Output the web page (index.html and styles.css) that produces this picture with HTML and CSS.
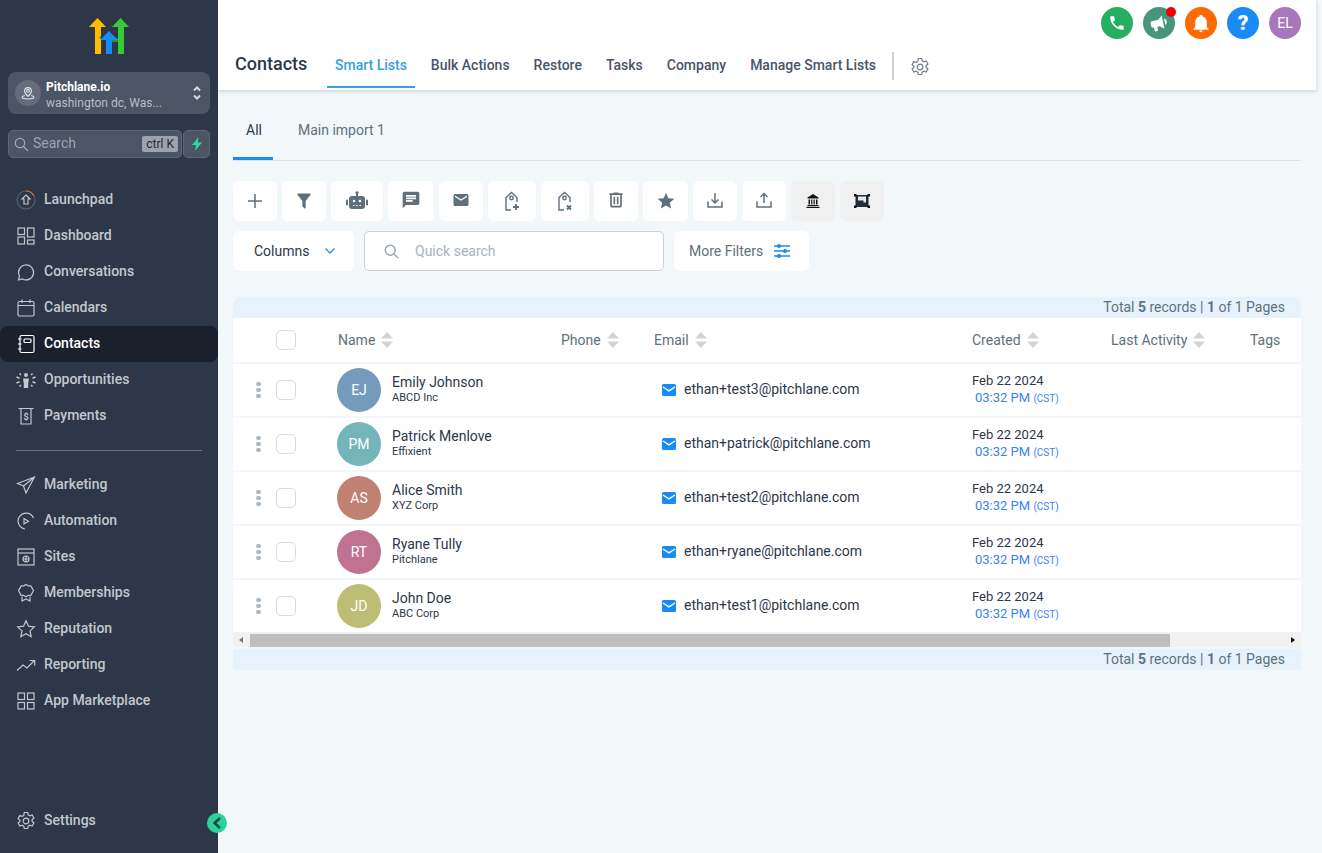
FILE: index.html
```html
<!DOCTYPE html>
<html lang="en">
<head>
  <meta charset="UTF-8">
  <meta name="viewport" content="width=device-width, initial-scale=1.0">
  <title>Contacts</title>
  <link rel="stylesheet" href="styles.css">
</head>
<body>
  <svg class="defs" width="0" height="0">
    <symbol id="sort" viewBox="0 0 12 16"><path d="M6 0l6 6.500H0zM6 16L0 9.500h12z"/></symbol>
    <symbol id="mail" viewBox="0 0 14 12"><path d="M1.500 0h11A1.500 1.500 0 0 1 14 1.500v9a1.500 1.500 0 0 1-1.500 1.500h-11A1.500 1.500 0 0 1 0 10.500v-9A1.500 1.500 0 0 1 1.500 0z"/><path d="M1 3l6 3.800L13 3" fill="none" stroke="#fff" stroke-width="1.400"/></symbol>
  </svg>

  <aside class="sidebar">
    <svg class="logo" width="40" height="36" viewBox="0 0 40 36">
      <path d="M0 9L8.500 0 17 9h-5v27H6V9z" fill="#ffbc00"/>
      <path d="M23 9L31.500 0 40 9h-5v27h-6V9z" fill="#37ca37"/>
      <path d="M12 20.500V18l-2 2zM23 20.500h6V24h-6z" fill="#1d9a2c"/>
      <path d="M11 22l9-9 9 9h-6v14h-6V22z" fill="#188bf6"/>
    </svg>

    <div class="location">
      <span class="location-icon">
        <svg width="14" height="14" viewBox="0 0 14 14" fill="none" stroke="#e2e5e9" stroke-width="1.100"><circle cx="7" cy="4.800" r="1.400"/><path d="M7 10.300C5 8.500 3.600 6.900 3.600 5A3.400 3.400 0 0 1 10.400 5C10.400 6.900 9 8.500 7 10.300z"/><path d="M3.800 9.500C2 10 1 10.600 1 11.300c0 1 2.700 1.700 6 1.700s6-.7 6-1.700c0-.7-1-1.300-2.800-1.800"/></svg>
      </span>
      <span class="location-text">
        <strong>Pitchlane.io</strong>
        <span>washington dc, Was...</span>
      </span>
      <svg class="location-arrows" width="10" height="16" viewBox="0 0 10 16" fill="none" stroke="#d5d8dd" stroke-width="2"><path d="M2 5.500l3-3 3 3M2 10.500l3 3 3-3"/></svg>
    </div>

    <div class="search-row">
      <div class="side-search">
        <svg width="15" height="15" viewBox="0 0 15 15" fill="none" stroke="#a0a7b2" stroke-width="1.300"><circle cx="6" cy="6" r="4.700"/><path d="M9.500 9.500l4.500 4.500"/></svg>
        <span class="side-search-text">Search</span>
        <kbd>ctrl K</kbd>
      </div>
      <button class="bolt">
        <svg width="12" height="14" viewBox="0 0 12 14"><path d="M7.500 0L1 8h4l-1 6 7-8.500H6.800z" fill="#37d69b"/></svg>
      </button>
    </div>

    <nav class="side-nav">
      <a class="side-link">
        <svg viewBox="0 0 20 20"><circle cx="10" cy="10" r="9" stroke="#566070"/><path d="M10 1a9 9 0 0 1 8 4.800" stroke="#d9772e"/><path d="M10 5l4 4h-2v5H8V9H6z"/></svg>
        Launchpad</a>
      <a class="side-link">
        <svg viewBox="0 0 20 20"><rect x="2" y="2" width="6.500" height="6.500"/><rect x="11.500" y="2" width="6.500" height="9"/><rect x="2" y="11" width="6.500" height="7"/><rect x="11.500" y="14" width="6.500" height="4"/></svg>
        Dashboard</a>
      <a class="side-link">
        <svg viewBox="0 0 20 20"><path d="M2.500 18l1-4A7.500 7.500 0 1 1 6.500 17z"/></svg>
        Conversations</a>
      <a class="side-link">
        <svg viewBox="0 0 20 20"><rect x="2" y="3.500" width="16" height="14.500" rx="1.500"/><path d="M2 7.500h16M6 1.500v3.500M14 1.500v3.500"/></svg>
        Calendars</a>
      <a class="side-link active">
        <svg viewBox="0 0 20 20"><rect x="4" y="1.500" width="14" height="17" rx="1.500"/><rect x="8" y="5" width="7" height="3.500" rx="1"/><path d="M2 5h3.500M2 10h3.500M2 15h3.500"/></svg>
        Contacts</a>
      <a class="side-link">
        <svg viewBox="0 0 20 20"><circle cx="10" cy="5" r="2" fill="#c3c7ce" stroke="none"/><path d="M7 8.500h6l-.8 5v4.500H7.800v-4.500z" fill="#c3c7ce" stroke="none"/><path d="M.5 7l3 1.200M.5 13l3-1.200M19.500 7l-3 1.200M19.500 13l-3-1.200M3.500 3.500l1.500 1.500M16.500 3.500L15 5M3.500 16.500L5 15M16.500 16.500L15 15" stroke-width="1.500"/></svg>
        Opportunities</a>
      <a class="side-link">
        <svg viewBox="0 0 20 20"><path d="M2.500 2.500h15M5 2.500V18h10V2.500"/><text x="10" y="14" text-anchor="middle" class="icon-dollar">$</text></svg>
        Payments</a>
    </nav>

    <div class="side-divider"></div>

    <nav class="side-nav lower">
      <a class="side-link">
        <svg viewBox="0 0 20 20"><path d="M18.500 2L1.500 8.500l6 2.500 2.500 7zM7.500 11L18.500 2"/></svg>
        Marketing</a>
      <a class="side-link">
        <svg viewBox="0 0 20 20"><path d="M17.500 7A8 8 0 1 0 9 18"/><path d="M8 7.500l4.500 2.700L8 13z"/></svg>
        Automation</a>
      <a class="side-link">
        <svg viewBox="0 0 20 20"><rect x="2" y="2" width="16" height="16"/><path d="M2 6h16"/><circle cx="10" cy="12" r="3"/><path d="M7 12h6M10 9v6"/></svg>
        Sites</a>
      <a class="side-link">
        <svg viewBox="0 0 20 20"><path d="M10 1.500l2.200 1.300 2.600.1 1.300 2.200 1.400 2.400-1.200 2.300-1.200 2.300-2.700.2L10 13.800l-2.400-1.500-2.700-.2-1.200-2.300-1.200-2.300 1.400-2.400 1.300-2.200 2.600-.1z"/><path d="M6 13.500V18l4-2 4 2v-4.500"/></svg>
        Memberships</a>
      <a class="side-link">
        <svg viewBox="0 0 20 20"><path d="M10 1.800l2.500 5.400 5.900.7-4.400 4 1.200 5.800-5.200-2.900-5.200 2.900L6 11.900l-4.400-4 5.900-.7z"/></svg>
        Reputation</a>
      <a class="side-link">
        <svg viewBox="0 0 20 20"><path d="M1 15.500l6-5.500 4 3 7.500-7.500M13.500 5.500h5.200v5"/></svg>
        Reporting</a>
      <a class="side-link">
        <svg viewBox="0 0 20 20"><rect x="2" y="2" width="6.500" height="6.500"/><rect x="11.500" y="2" width="6.500" height="6.500"/><rect x="2" y="11.500" width="6.500" height="6.500"/><rect x="11.500" y="11.500" width="6.500" height="6.500"/></svg>
        App Marketplace</a>
    </nav>

    <a class="side-link settings">
      <svg viewBox="0 0 20 20"><circle cx="10" cy="10" r="2.800"/><path d="M8.300 1.500h3.400l.5 2.400 1.700.9 2.300-.8 1.700 3-1.800 1.600v1.800l1.800 1.600-1.700 3-2.300-.8-1.700.9-.5 2.400H8.300l-.5-2.400-1.700-.9-2.300.8-1.700-3 1.800-1.600V9.200L2.100 7.600l1.700-3 2.300.8 1.700-.9z"/></svg>
      Settings</a>
    <button class="collapse">
      <svg width="10" height="12" viewBox="0 0 10 12" fill="none" stroke="#17423a" stroke-width="2.400"><path d="M8 1L2.500 6 8 11"/></svg>
    </button>
  </aside>

  <main class="main">
    <header class="topbar">
      <div class="top-actions">
        <span class="round green"><svg width="18" height="18" viewBox="0 0 24 24" fill="#fff"><path d="M6.620,10.790C8.060,13.620 10.380,15.940 13.210,17.380L15.410,15.180C15.690,14.900 16.080,14.820 16.430,14.930C17.550,15.300 18.750,15.500 20,15.500A1,1 0 0,1 21,16.500V20A1,1 0 0,1 20,21A17,17 0 0,1 3,4A1,1 0 0,1 4,3H7.500A1,1 0 0,1 8.500,4C8.500,5.250 8.700,6.450 9.070,7.570C9.180,7.920 9.100,8.310 8.820,8.590L6.620,10.790Z"/></svg></span>
        <span class="round teal"><svg width="20" height="20" viewBox="0 0 24 24" fill="#fff"><path transform="rotate(-12 12 12)" d="M12,8H4A2,2 0 0,0 2,10V14A2,2 0 0,0 4,16H5V20A1,1 0 0,0 6,21H8A1,1 0 0,0 9,20V16H12L17,20V4L12,8M21.500,12C21.500,13.710 20.540,15.260 19,16V8C20.530,8.750 21.500,10.300 21.500,12Z"/></svg><i class="dot-red"></i></span>
        <span class="round orange"><svg width="20" height="20" viewBox="0 0 24 24" fill="#fff"><path d="M21,19V20H3V19L5,17V11C5,7.900 7.030,5.170 10,4.290C10,4.190 10,4.100 10,4A2,2 0 0,1 12,2A2,2 0 0,1 14,4C14,4.100 14,4.190 14,4.290C16.970,5.170 19,7.900 19,11V17L21,19M14,21A2,2 0 0,1 12,23A2,2 0 0,1 10,21"/></svg></span>
        <span class="round blue help">?</span>
        <span class="round purple">EL</span>
      </div>
      <div class="top-nav">
        <h1>Contacts</h1>
        <a class="top-tab active">Smart Lists</a>
        <a class="top-tab">Bulk Actions</a>
        <a class="top-tab">Restore</a>
        <a class="top-tab">Tasks</a>
        <a class="top-tab">Company</a>
        <a class="top-tab">Manage Smart Lists</a>
        <span class="top-sep"></span>
        <svg class="top-gear" width="20" height="20" viewBox="0 0 20 20" fill="none" stroke="#737d88" stroke-width="1.200"><circle cx="10" cy="10" r="2.800"/><path d="M8.300 1.500h3.400l.5 2.400 1.700.9 2.300-.8 1.700 3-1.800 1.600v1.800l1.800 1.600-1.700 3-2.300-.8-1.700.9-.5 2.400H8.300l-.5-2.400-1.700-.9-2.300.8-1.700-3 1.800-1.600V9.200L2.100 7.600l1.700-3 2.300.8 1.700-.9z"/></svg>
      </div>
    </header>

    <section class="content">
      <div class="list-tabs">
        <a class="list-tab active">All</a>
        <a class="list-tab">Main import 1</a>
      </div>

      <div class="toolbar">
        <button class="tool w44"><svg width="16" height="16" viewBox="0 0 16 16" stroke="#5f707c" stroke-width="1.500"><path d="M8 1v14M1 8h14"/></svg></button>
        <button class="tool w44"><svg width="20" height="20" viewBox="0 0 24 24" fill="#5f707c"><path d="M14,12V19.880C14.040,20.180 13.940,20.500 13.710,20.710C13.320,21.100 12.690,21.100 12.300,20.710L10.290,18.700C10.060,18.470 9.960,18.160 10,17.870V12H9.970L4.210,4.620C3.870,4.190 3.950,3.560 4.380,3.220C4.570,3.080 4.780,3 5,3V3H19V3C19.220,3 19.430,3.080 19.620,3.220C20.050,3.560 20.130,4.190 19.790,4.620L14.030,12H14Z"/></svg></button>
        <button class="tool w52"><svg width="22" height="20" viewBox="0 0 22 20" fill="#5f707c"><rect x="3" y="5" width="16" height="13" rx="3"/><rect x="0" y="8.500" width="2" height="6" rx="1"/><rect x="20" y="8.500" width="2" height="6" rx="1"/><rect x="10" y="1.500" width="2" height="4"/><circle cx="11" cy="1.800" r="1.600"/><circle cx="8" cy="10" r="1.300" fill="#fff"/><circle cx="14" cy="10" r="1.300" fill="#fff"/><path d="M7 14h1.500v1H7zM10.200 14h1.500v1h-1.500zM13.500 14H15v1h-1.500z" fill="#fff"/></svg></button>
        <button class="tool w46"><svg class="up1" width="20" height="20" viewBox="0 0 24 24" fill="#5f707c"><path d="M20,2H4A2,2 0 0,0 2,4V22L6,18H20A2,2 0 0,0 22,16V4A2,2 0 0,0 20,2M6,9H18V11H6M14,14H6V12H14M18,8H6V6H18"/></svg></button>
        <button class="tool w44"><svg class="up1" width="18" height="18" viewBox="0 0 24 24" fill="#5f707c"><path d="M20,8L12,13L4,8V6L12,11L20,6M20,4H4C2.890,4 2,4.890 2,6V18A2,2 0 0,0 4,20H20A2,2 0 0,0 22,18V6C22,4.890 21.100,4 20,4Z"/></svg></button>
        <button class="tool w48"><svg width="16" height="20" viewBox="0 0 16 20" fill="none" stroke="#5f707c" stroke-width="1.400"><path d="M7 19H2V6.500L7.500 1.500 13 6.500V11"/><circle cx="7.500" cy="7" r="1.700"/><path d="M12 13v6M9 16h6" stroke-width="1.800"/></svg></button>
        <button class="tool w48"><svg width="16" height="20" viewBox="0 0 16 20" fill="none" stroke="#5f707c" stroke-width="1.400"><path d="M7 19H2V6.500L7.500 1.500 13 6.500V11"/><circle cx="7.500" cy="7" r="1.700"/><path d="M10 14.500l4 4M14 14.500l-4 4" stroke-width="1.800"/></svg></button>
        <button class="tool w44"><svg class="up1" width="20" height="20" viewBox="0 0 24 24" fill="#5f707c"><path d="M9,3V4H4V6H5V19A2,2 0 0,0 7,21H17A2,2 0 0,0 19,19V6H20V4H15V3H9M7,6H17V19H7V6M9,8V17H11V8H9M13,8V17H15V8H13Z"/></svg></button>
        <button class="tool w45"><svg width="20" height="20" viewBox="0 0 24 24" fill="#5f707c"><path d="M12,17.270L18.180,21L16.540,13.970L22,9.240L14.810,8.620L12,2L9.190,8.620L2,9.240L7.450,13.970L5.820,21L12,17.270Z"/></svg></button>
        <button class="tool w44"><svg class="up1" width="16" height="16" viewBox="0 0 16 16" fill="none" stroke="#5f707c" stroke-width="1.500"><path d="M1 9.500V15h14V9.500M8 1v9.500M4.500 7.500L8 11l3.500-3.500"/></svg></button>
        <button class="tool w44"><svg class="up1" width="16" height="16" viewBox="0 0 16 16" fill="none" stroke="#5f707c" stroke-width="1.500"><path d="M1 9.500V15h14V9.500M8 11V1.500M4.500 5L8 1.500 11.500 5"/></svg></button>
        <button class="tool w44 muted"><svg width="14" height="14" viewBox="0 0 14 14"><path d="M7 0L1.500 3.500v1h11v-1z" fill="#111"/><path d="M2.500 5.500h1.500v5H2.500zM5.200 5.500h1.200v5H5.200zM7.600 5.500h1.200v5H7.600zM10 5.500h1.500v5H10z" fill="#111"/><path d="M1.500 11h11v1h-11zM.5 12.800h13v1.200H.5z" fill="#111"/></svg></button>
        <button class="tool w44 muted"><svg width="16" height="14" viewBox="0 0 16 14"><path d="M1.500 1h13v12h-13z" fill="#1f2d3a"/><path d="M4 2.500h8v6H9.500V6.500H4z" fill="#e8e8e8"/><path d="M0 0h2.500v2.500H0zM13.500 0H16v2.500h-2.500zM0 11.500h2.500V14H0zM13.500 11.500H16V14h-2.500z" fill="#111"/></svg></button>
      </div>

      <div class="filters">
        <button class="columns-btn">Columns
          <svg width="12" height="8" viewBox="0 0 12 8" fill="none" stroke="#3b82f6" stroke-width="1.300"><path d="M1.500 1.500L6 6l4.500-4.500"/></svg>
        </button>
        <div class="quick-search">
          <svg width="15" height="15" viewBox="0 0 15 15" fill="none" stroke="#9aa5b1" stroke-width="1.400"><circle cx="6.200" cy="6.200" r="5"/><path d="M10 10l4.300 4.300"/></svg>
          <span>Quick search</span>
        </div>
        <button class="more-filters">More Filters
          <svg width="16" height="14" viewBox="0 0 16 14" stroke="#188bf6" stroke-width="1.500" fill="#188bf6"><path d="M0 2h16M0 7h16M0 12h16"/><circle cx="5" cy="2" r="1.200"/><circle cx="11" cy="7" r="1.200"/><circle cx="5" cy="12" r="1.200"/></svg>
        </button>
      </div>

      <div class="table-wrap">
        <div class="summary top">Total <b>5</b> records | <b>1</b> of 1 Pages</div>

        <div class="row head">
          <span></span>
          <span class="check"></span>
          <span class="th name-th">Name <svg class="sort"><use href="#sort"/></svg></span>
          <span class="th">Phone <svg class="sort"><use href="#sort"/></svg></span>
          <span class="th">Email <svg class="sort"><use href="#sort"/></svg></span>
          <span class="th">Created <svg class="sort"><use href="#sort"/></svg></span>
          <span class="th">Last Activity <svg class="sort"><use href="#sort"/></svg></span>
          <span class="th">Tags</span>
        </div>

        <div class="row">
          <span class="dots"><i></i><i></i><i></i></span>
          <span class="check"></span>
          <div class="person"><span class="avatar c-blue">EJ</span><div class="person-text"><p class="name">Emily Johnson</p><p class="company">ABCD Inc</p></div></div>
          <span></span>
          <span class="email"><svg class="mail"><use href="#mail"/></svg>ethan+test3@pitchlane.com</span>
          <div class="date"><p>Feb 22 2024</p><p class="time">03:32 PM <small>(CST)</small></p></div>
        </div>
        <div class="row">
          <span class="dots"><i></i><i></i><i></i></span>
          <span class="check"></span>
          <div class="person"><span class="avatar c-teal">PM</span><div class="person-text"><p class="name">Patrick Menlove</p><p class="company">Effixient</p></div></div>
          <span></span>
          <span class="email"><svg class="mail"><use href="#mail"/></svg>ethan+patrick@pitchlane.com</span>
          <div class="date"><p>Feb 22 2024</p><p class="time">03:32 PM <small>(CST)</small></p></div>
        </div>
        <div class="row">
          <span class="dots"><i></i><i></i><i></i></span>
          <span class="check"></span>
          <div class="person"><span class="avatar c-red">AS</span><div class="person-text"><p class="name">Alice Smith</p><p class="company">XYZ Corp</p></div></div>
          <span></span>
          <span class="email"><svg class="mail"><use href="#mail"/></svg>ethan+test2@pitchlane.com</span>
          <div class="date"><p>Feb 22 2024</p><p class="time">03:32 PM <small>(CST)</small></p></div>
        </div>
        <div class="row">
          <span class="dots"><i></i><i></i><i></i></span>
          <span class="check"></span>
          <div class="person"><span class="avatar c-pink">RT</span><div class="person-text"><p class="name">Ryane Tully</p><p class="company">Pitchlane</p></div></div>
          <span></span>
          <span class="email"><svg class="mail"><use href="#mail"/></svg>ethan+ryane@pitchlane.com</span>
          <div class="date"><p>Feb 22 2024</p><p class="time">03:32 PM <small>(CST)</small></p></div>
        </div>
        <div class="row">
          <span class="dots"><i></i><i></i><i></i></span>
          <span class="check"></span>
          <div class="person"><span class="avatar c-olive">JD</span><div class="person-text"><p class="name">John Doe</p><p class="company">ABC Corp</p></div></div>
          <span></span>
          <span class="email"><svg class="mail"><use href="#mail"/></svg>ethan+test1@pitchlane.com</span>
          <div class="date"><p>Feb 22 2024</p><p class="time">03:32 PM <small>(CST)</small></p></div>
        </div>

        <div class="scrollbar">
          <span class="arrow left"></span>
          <span class="thumb"></span>
          <span class="arrow right"></span>
        </div>

        <div class="summary bottom">Total <b>5</b> records | <b>1</b> of 1 Pages</div>
      </div>
    </section>
  </main>
</body>
</html>
```

FILE: styles.css
```css
*{
  box-sizing: border-box;
}

html, body{
  height: 100%;
}

body{
  margin: 0;
  display: flex;
  overflow: hidden;
  background-color: #f2f7fa;
  font-family: Roboto, "Liberation Sans", sans-serif;
  font-size: 14px;
}

p, h1{
  margin: 0;
}

button{
  border: 0;
  padding: 0;
  font: inherit;
  cursor: pointer;
}

.defs{
  position: absolute;
}

/* sidebar */
.sidebar{
  position: relative;
  flex: none;
  width: 218px;
  height: 853px;
  padding-top: 18px;
  display: flex;
  flex-direction: column;
  background-color: #2d3748;
}

.logo{
  flex: none;
  margin-left: 89px;
}

.location{
  flex: none;
  height: 42px;
  margin: 18px 8px 0;
  padding: 0 8px 0 7px;
  display: flex;
  align-items: center;
  border-radius: 8px;
  background-color: #4b5563;
}

.location-icon{
  width: 26px;
  height: 26px;
  margin-right: 5px;
  display: flex;
  align-items: center;
  justify-content: center;
  border-radius: 50%;
  background-color: #646d7a;
}

.location-text{
  flex: 1;
  padding-top: 3px;
  display: flex;
  flex-direction: column;
  font-size: 12px;
  line-height: 16px;
  color: #b9bec6;
}

.location-text strong{
  font-weight: 700;
  color: #fff;
}

.search-row{
  flex: none;
  height: 28px;
  margin: 16px 8px 0;
  display: flex;
  gap: 1px;
}

.side-search{
  flex: 1;
  padding: 0 3px 2px 5px;
  display: flex;
  align-items: center;
  border: 1px solid #5b6676;
  border-radius: 5px;
  background-color: #4b5563;
}

.side-search svg{
  margin-top: 2px;
}

.side-search-text{
  flex: 1;
  margin-left: 4px;
  color: #9ca3af;
}

kbd{
  padding: 0 4px;
  height: 16px;
  margin-top: 2px;
  font-family: inherit;
  font-size: 12px;
  line-height: 16px;
  border-radius: 2px;
  color: #1f2937;
  background-color: #9ca3af;
}

.bolt{
  width: 27px;
  display: flex;
  align-items: center;
  justify-content: center;
  border: 1px solid #5b6676;
  border-radius: 5px;
  background-color: #4b5563;
}

.side-nav{
  flex: none;
  margin-top: 24px;
}

.side-nav.lower{
  margin-top: 16px;
}

.side-link{
  height: 36px;
  padding-left: 16px;
  padding-bottom: 2px;
  display: flex;
  align-items: center;
  gap: 8px;
  font-weight: 500;
  color: #c3c7ce;
}

.side-link svg{
  flex: none;
  width: 20px;
  height: 20px;
  margin-top: 2px;
  fill: none;
  stroke: #c3c7ce;
  stroke-width: 1.200;
}

.side-link.active{
  border-radius: 8px;
  color: #fff;
  background-color: #1a202c;
}

.side-link.active svg{
  stroke: #fff;
}

.icon-dollar{
  font-size: 9px;
  font-weight: 700;
  fill: #c3c7ce;
  stroke: none;
}

.side-divider{
  flex: none;
  height: 1px;
  margin: 16px 16px 0;
  background-color: #6b7380;
}

.settings{
  flex: none;
  margin-top: auto;
  margin-bottom: 14px;
}

.collapse{
  position: absolute;
  left: 207px;
  top: 813px;
  width: 20px;
  height: 20px;
  display: flex;
  align-items: center;
  justify-content: center;
  border-radius: 50%;
  background-color: #2bd29a;
}

/* header */
.main{
  flex: 1;
  min-width: 0;
}

.topbar{
  height: 90px;
  margin-right: 6px;
  background-color: #fff;
  box-shadow: 0 1px 4px rgba(0, 0, 0, .18);
}

.top-actions{
  height: 46px;
  padding: 7px 15px 0 0;
  display: flex;
  justify-content: flex-end;
  gap: 10px;
}

.round{
  position: relative;
  width: 32px;
  height: 32px;
  display: flex;
  align-items: center;
  justify-content: center;
  border-radius: 50%;
  color: #fff;
}

.green{ background-color: #27ae60; }
.teal{ background-color: #46967e; }
.orange{ background-color: #ff6a00; }
.blue{ background-color: #188bf6; }
.purple{ background-color: #a877ba; }

.help{
  font-size: 21px;
  font-weight: 900;
}

.dot-red{
  position: absolute;
  top: 0;
  right: -1px;
  width: 10px;
  height: 10px;
  border-radius: 50%;
  background-color: #f30000;
}

.top-nav{
  height: 44px;
  padding-left: 17px;
  display: flex;
  align-items: center;
}

.top-nav h1{
  width: 88px;
  margin-top: -9px;
  font-size: 18px;
  font-weight: 500;
  color: #2d3748;
}

.top-tab{
  height: 42px;
  margin: -2px 4px 0;
  padding: 0 8px 2px;
  display: flex;
  align-items: center;
  font-weight: 500;
  color: #4a5568;
  border-bottom: 2px solid transparent;
}

.top-tab.active{
  color: #37a0dc;
  padding-bottom: 3px;
  border-bottom-color: #37a0dc;
}

.top-sep{
  width: 2px;
  height: 28px;
  margin: -4px 0 0 4px;
  background-color: #cbd0d8;
}

.top-gear{
  margin: -2px 0 0 16px;
}

/* content */
.content{
  padding: 0 21px 0 15px;
}

.list-tabs{
  height: 71px;
  display: flex;
  border-bottom: 1px solid #dde3ea;
}

.list-tab{
  margin-right: 25px;
  padding-top: 10px;
  display: flex;
  align-items: center;
  color: #607179;
}

.list-tab.active{
  padding: 13px 11px 0 13px;
  color: #2d3748;
  border-bottom: 3px solid #188bf6;
}

.toolbar{
  margin-top: 20px;
  display: flex;
  gap: 5px;
}

.tool{
  height: 40px;
  display: flex;
  align-items: center;
  justify-content: center;
  border-radius: 6px;
  background-color: #fff;
}

.up1{
  margin-bottom: 2px;
}

.tool.muted{
  background-color: #f0f0f0;
}

.w44{ width: 44px; }
.w45{ width: 45px; }
.w46{ width: 46px; }
.w48{ width: 48px; }
.w52{ width: 52px; }

.filters{
  margin-top: 10px;
  display: flex;
  gap: 10px;
}

.columns-btn{
  width: 121px;
  height: 40px;
  padding-left: 21px;
  display: flex;
  align-items: center;
  gap: 15px;
  border-radius: 6px;
  color: #2d3748;
  background-color: #fff;
}

.quick-search{
  width: 300px;
  height: 40px;
  padding-left: 19px;
  display: flex;
  align-items: center;
  gap: 16px;
  border: 1px solid #cbd0dc;
  border-radius: 5px;
  color: #a9b2bd;
  background-color: #fff;
}

.more-filters{
  width: 135px;
  height: 40px;
  padding-left: 15px;
  display: flex;
  align-items: center;
  gap: 11px;
  border-radius: 6px;
  color: #607179;
  background-color: #fff;
}

/* table */
.table-wrap{
  margin-top: 26px;
}

.summary{
  height: 21px;
  padding-right: 16px;
  text-align: right;
  line-height: 21px;
  color: #607179;
  background-color: #e8f2fc;
}

.summary b{
  font-weight: 700;
}

.summary.top{
  border-radius: 8px 8px 0 0;
}

.summary.bottom{
  margin-top: 2px;
}

.row{
  height: 52px;
  display: grid;
  grid-template-columns: 43px 61px 224px 93px 318px 139px 139px 1fr;
  align-items: center;
  background-color: #fff;
}

.row + .row{
  margin-top: 2px;
}

.row.head{
  height: 44px;
}

.th{
  display: flex;
  align-items: center;
  gap: 6px;
  color: #607179;
}

.name-th{
  padding-left: 1px;
}

.sort{
  width: 12px;
  height: 16px;
  fill: #d3d3d3;
}

.check{
  width: 20px;
  height: 20px;
  border: 1px solid #d5dae5;
  border-radius: 5px;
  background-color: #fff;
}

.dots{
  padding-left: 23px;
  display: flex;
  flex-direction: column;
  gap: 1.500px;
}

.dots i{
  width: 4.500px;
  height: 4.500px;
  border-radius: 50%;
  background-color: #a9b8c6;
}

.person{
  display: flex;
  align-items: center;
  gap: 11px;
}

.person-text{
  padding-bottom: 2px;
}

.avatar{
  flex: none;
  width: 44px;
  height: 44px;
  display: flex;
  align-items: center;
  justify-content: center;
  border-radius: 50%;
  color: #fff;
}

.c-blue{ background-color: #749bbd; }
.c-teal{ background-color: #74b5ba; }
.c-red{ background-color: #c08072; }
.c-pink{ background-color: #c07390; }
.c-olive{ background-color: #bebd75; }

.name{
  line-height: 16px;
  color: #2d3748;
}

.company{
  margin-top: 1px;
  font-size: 11px;
  line-height: 14px;
  color: #2d3748;
}

.email{
  padding-left: 8px;
  padding-bottom: 2px;
  display: flex;
  align-items: center;
  gap: 8px;
  color: #2d3748;
}

.mail{
  width: 14px;
  height: 12px;
  margin-top: 2px;
  fill: #188bf6;
}

.date{
  font-size: 13px;
  line-height: 17px;
  padding-bottom: 1px;
  color: #2d3748;
}

.time{
  padding-left: 3px;
  color: #3b82f6;
}

.time small{
  font-size: 10px;
}

.scrollbar{
  height: 15px;
  display: flex;
  align-items: flex-end;
  background-color: #f1f1f1;
}

.arrow{
  position: relative;
  flex: none;
  width: 17px;
  height: 15px;
}

.arrow::after{
  content: "";
  position: absolute;
  top: 5px;
  border-top: 3.500px solid transparent;
  border-bottom: 3.500px solid transparent;
}

.arrow.left::after{
  left: 6px;
  border-right: 4px solid #777;
}

.arrow.right{
  margin-left: auto;
}

.arrow.right::after{
  right: 6px;
  border-left: 4px solid #111;
}

.thumb{
  width: 920px;
  height: 13px;
  background-color: #bebebe;
}
```
